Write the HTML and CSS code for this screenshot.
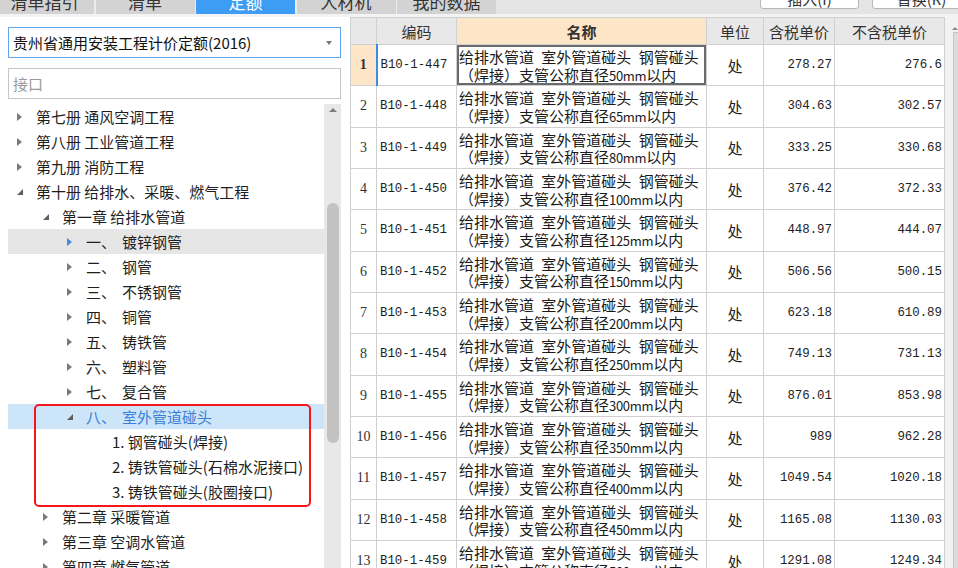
FILE: index.html
```html
<!DOCTYPE html>
<html lang="zh-CN">
<head>
<meta charset="utf-8">
<title>定额</title>
<link rel="stylesheet" href="styles.css">
</head>
<body>
<div class="topbar">
  <div class="tabs">
    <div class="tab"><span>清单指引</span></div>
    <div class="tab"><span>清单</span></div>
    <div class="tab active"><span>定额</span></div>
    <div class="tab"><span>人材机</span></div>
    <div class="tab"><span>我的数据</span></div>
  </div>
  <div class="actions">
    <div class="btn"><span>插入(I)</span></div>
    <div class="btn"><span>替换(R)</span></div>
  </div>
</div>
<div class="main">
  <div class="left">
    <div class="select"><span>贵州省通用安装工程计价定额(2016)</span><i class="caret"></i></div>
    <div class="search">接口</div>
    <div class="treewrap">
      <div class="tree">
        <div class="row l0"><i class="arr"></i><span>第七册 通风空调工程</span></div>
        <div class="row l0"><i class="arr"></i><span>第八册 工业管道工程</span></div>
        <div class="row l0"><i class="arr"></i><span>第九册 消防工程</span></div>
        <div class="row l0"><i class="arr open"></i><span>第十册 给排水、采暖、燃气工程</span></div>
        <div class="row l1"><i class="arr open"></i><span>第一章 给排水管道</span></div>
        <div class="row l2 sel-gray"><i class="arr blue"></i><span class="num">一、</span><span>镀锌钢管</span></div>
        <div class="row l2"><i class="arr"></i><span class="num">二、</span><span>钢管</span></div>
        <div class="row l2"><i class="arr"></i><span class="num">三、</span><span>不锈钢管</span></div>
        <div class="row l2"><i class="arr"></i><span class="num">四、</span><span>铜管</span></div>
        <div class="row l2"><i class="arr"></i><span class="num">五、</span><span>铸铁管</span></div>
        <div class="row l2"><i class="arr"></i><span class="num">六、</span><span>塑料管</span></div>
        <div class="row l2"><i class="arr"></i><span class="num">七、</span><span>复合管</span></div>
        <div class="row l2 sel-blue"><i class="arr open"></i><span class="num">八、</span><span>室外管道碰头</span></div>
        <div class="row l3"><span>1. 钢管碰头(焊接)</span></div>
        <div class="row l3"><span>2. 铸铁管碰头(石棉水泥接口)</span></div>
        <div class="row l3"><span>3. 铸铁管碰头(胶圈接口)</span></div>
        <div class="row l1"><i class="arr"></i><span>第二章 采暖管道</span></div>
        <div class="row l1"><i class="arr"></i><span>第三章 空调水管道</span></div>
        <div class="row l1"><i class="arr"></i><span>第四章 燃气管道</span></div>
      </div>
      <div class="vscroll"><i class="up"></i><div class="thumb"></div></div>
      <div class="redbox"></div>
    </div>
  </div>
  <div class="right">
    <table class="grid">
      <colgroup><col class="c-no"><col class="c-code"><col class="c-name"><col class="c-unit"><col class="c-tax"><col class="c-notax"></colgroup>
      <thead>
        <tr><th class="no"></th><th>编码</th><th class="hname">名称</th><th>单位</th><th>含税单价</th><th>不含税单价</th></tr>
      </thead>
      <tbody>
        <tr class="cur"><td class="no">1</td><td class="code">B10-1-447</td><td class="name">给排水管道 室外管道碰头 钢管碰头<br>（焊接）支管公称直径<span class="dim">50mm</span>以内</td><td class="unit">处</td><td class="price">278.27</td><td class="price">276.6</td></tr>
        <tr><td class="no">2</td><td class="code">B10-1-448</td><td class="name">给排水管道 室外管道碰头 钢管碰头<br>（焊接）支管公称直径<span class="dim">65mm</span>以内</td><td class="unit">处</td><td class="price">304.63</td><td class="price">302.57</td></tr>
        <tr><td class="no">3</td><td class="code">B10-1-449</td><td class="name">给排水管道 室外管道碰头 钢管碰头<br>（焊接）支管公称直径<span class="dim">80mm</span>以内</td><td class="unit">处</td><td class="price">333.25</td><td class="price">330.68</td></tr>
        <tr><td class="no">4</td><td class="code">B10-1-450</td><td class="name">给排水管道 室外管道碰头 钢管碰头<br>（焊接）支管公称直径<span class="dim">100mm</span>以内</td><td class="unit">处</td><td class="price">376.42</td><td class="price">372.33</td></tr>
        <tr><td class="no">5</td><td class="code">B10-1-451</td><td class="name">给排水管道 室外管道碰头 钢管碰头<br>（焊接）支管公称直径<span class="dim">125mm</span>以内</td><td class="unit">处</td><td class="price">448.97</td><td class="price">444.07</td></tr>
        <tr><td class="no">6</td><td class="code">B10-1-452</td><td class="name">给排水管道 室外管道碰头 钢管碰头<br>（焊接）支管公称直径<span class="dim">150mm</span>以内</td><td class="unit">处</td><td class="price">506.56</td><td class="price">500.15</td></tr>
        <tr><td class="no">7</td><td class="code">B10-1-453</td><td class="name">给排水管道 室外管道碰头 钢管碰头<br>（焊接）支管公称直径<span class="dim">200mm</span>以内</td><td class="unit">处</td><td class="price">623.18</td><td class="price">610.89</td></tr>
        <tr><td class="no">8</td><td class="code">B10-1-454</td><td class="name">给排水管道 室外管道碰头 钢管碰头<br>（焊接）支管公称直径<span class="dim">250mm</span>以内</td><td class="unit">处</td><td class="price">749.13</td><td class="price">731.13</td></tr>
        <tr><td class="no">9</td><td class="code">B10-1-455</td><td class="name">给排水管道 室外管道碰头 钢管碰头<br>（焊接）支管公称直径<span class="dim">300mm</span>以内</td><td class="unit">处</td><td class="price">876.01</td><td class="price">853.98</td></tr>
        <tr><td class="no">10</td><td class="code">B10-1-456</td><td class="name">给排水管道 室外管道碰头 钢管碰头<br>（焊接）支管公称直径<span class="dim">350mm</span>以内</td><td class="unit">处</td><td class="price">989</td><td class="price">962.28</td></tr>
        <tr><td class="no">11</td><td class="code">B10-1-457</td><td class="name">给排水管道 室外管道碰头 钢管碰头<br>（焊接）支管公称直径<span class="dim">400mm</span>以内</td><td class="unit">处</td><td class="price">1049.54</td><td class="price">1020.18</td></tr>
        <tr><td class="no">12</td><td class="code">B10-1-458</td><td class="name">给排水管道 室外管道碰头 钢管碰头<br>（焊接）支管公称直径<span class="dim">450mm</span>以内</td><td class="unit">处</td><td class="price">1165.08</td><td class="price">1130.03</td></tr>
        <tr><td class="no">13</td><td class="code">B10-1-459</td><td class="name">给排水管道 室外管道碰头 钢管碰头<br>（焊接）支管公称直径<span class="dim">500mm</span>以内</td><td class="unit">处</td><td class="price">1291.08</td><td class="price">1249.34</td></tr>
      </tbody>
    </table>
    <div class="tscroll"><i class="up"></i><div class="tthumb"></div></div>
  </div>
</div>
</body>
</html>
```
FILE: styles.css
```css
html, body {
  margin: 0;
  padding: 0;
}
body {
  width: 958px;
  height: 568px;
  overflow: hidden;
  background: #fff;
  color: #222;
  font-family: "Noto Sans CJK SC", "Noto Sans", sans-serif;
}

/* top bar */
.topbar {
  height: 14px;
  display: flex;
  justify-content: space-between;
  background: #e4e4e4;
  border-bottom: 3px solid #f3f3f3;
  overflow: hidden;
}
.tabs {
  display: flex;
  gap: 1.5px;
  margin-left: -5px;
  background: #ececec;
}
.tab {
  width: 99px;
  height: 14px;
  background: #d3d3d3;
  display: flex;
  justify-content: center;
  align-items: flex-end;
  overflow: hidden;
  color: #333;
}
.tab span {
  font-size: 17px;
  line-height: 17px;
  margin-bottom: 4px;
  white-space: nowrap;
}
.tab.active {
  background: #3d9cf3;
  color: #fff;
}
.actions {
  display: flex;
  gap: 13px;
  margin-right: -13px;
}
.btn {
  width: 99px;
  height: 19px;
  margin-top: -10px;
  box-sizing: border-box;
  background: #fff;
  border: 1px solid #b8b8b8;
  border-radius: 3px;
  display: flex;
  justify-content: center;
  align-items: flex-start;
  overflow: hidden;
  color: #333;
}
.btn span {
  font-size: 15px;
  line-height: 15px;
  white-space: nowrap;
}

/* main */
.main {
  display: flex;
  height: 551px;
  overflow: hidden;
}
.left {
  width: 342px;
  flex: none;
  box-sizing: border-box;
  padding: 10px 1px 0 8px;
  background: #fff;
}
.select {
  height: 31px;
  box-sizing: border-box;
  border: 1px solid #63a5ec;
  display: flex;
  align-items: center;
  padding-left: 4px;
  font-size: 15px;
  color: #111;
}
.caret {
  margin-left: auto;
  margin-right: 8px;
  width: 0;
  height: 0;
  border-top: 4px solid #777;
  border-left: 3.5px solid transparent;
  border-right: 3.5px solid transparent;
}
.search {
  margin-top: 10px;
  height: 31px;
  box-sizing: border-box;
  border: 1px solid #c6c6c6;
  display: flex;
  align-items: center;
  padding-left: 4px;
  font-size: 15px;
  color: #9a9a9a;
}
.treewrap {
  margin-top: 5px;
  height: 464px;
  display: flex;
  position: relative;
}
.tree {
  flex: 1;
  overflow: hidden;
}
.row {
  height: 25px;
  display: flex;
  align-items: center;
  font-size: 15px;
  color: #1e1e1e;
  white-space: nowrap;
}
.row.l0 { padding-left: 9px; }
.row.l1 { padding-left: 35px; }
.row.l2 { padding-left: 59px; }
.row.l3 { padding-left: 104px; }
.arr {
  width: 19px;
  height: 25px;
  flex: none;
  position: relative;
}
.arr::before {
  content: "";
  position: absolute;
  left: 0;
  top: 8.5px;
  width: 0;
  height: 0;
  border-left: 5px solid #7a7a7a;
  border-top: 4px solid transparent;
  border-bottom: 4px solid transparent;
}
.arr.blue::before {
  border-left-color: #3a8fe2;
}
.arr.open::before {
  top: 10px;
  left: 0;
  border-left: 6px solid transparent;
  border-top: 0;
  border-bottom: 6px solid #5e5e5e;
}
.num {
  width: 36px;
  flex: none;
}
.sel-gray { background: #e6e6e6; }
.sel-blue { background: #cde5f8; color: #3a80d6; }

.vscroll {
  width: 17px;
  flex: none;
  background: #e8e8e8;
  display: flex;
  flex-direction: column;
  align-items: center;
  padding-top: 4px;
  box-sizing: border-box;
}
.vscroll .up {
  width: 0;
  height: 0;
  border-bottom: 4px solid #7e7e7e;
  border-left: 4.5px solid transparent;
  border-right: 4.5px solid transparent;
}
.vscroll .thumb {
  margin-top: 91px;
  width: 12px;
  height: 240px;
  border-radius: 6px;
  background: #c2c2c2;
}
.redbox {
  position: absolute;
  left: 26px;
  top: 300px;
  width: 277px;
  height: 103px;
  box-sizing: border-box;
  border: 2.5px solid #f5161b;
  border-radius: 5px;
}

/* right table */
.right {
  flex: 1;
  display: flex;
  padding-left: 8px;
  background: #fff;
}
.grid {
  width: 594px;
  flex: none;
  table-layout: fixed;
  border-collapse: collapse;
  align-self: flex-start;
  font-size: 15px;
  color: #222;
}
.c-no { width: 26px; }
.c-code { width: 80px; }
.c-name { width: 250px; }
.c-unit { width: 57px; }
.c-tax { width: 71px; }
.c-notax { width: 110px; }
.grid th, .grid td {
  border: 1px solid #d0d0d0;
  padding: 0;
  overflow: hidden;
  white-space: nowrap;
}
.grid thead tr { height: 27px; }
.grid th {
  background: #e8e8e8;
  font-weight: normal;
  color: #333;
  text-align: center;
}
.grid th.hname {
  background: #fde5c8;
  font-weight: bold;
}
.grid tbody tr { height: 41.33px; }
.grid td.no {
  text-align: center;
  font-family: "Liberation Serif", serif;
  font-size: 14px;
  color: #333;
}
.grid td.code {
  font-family: "Liberation Mono", monospace;
  font-size: 12.4px;
  padding-left: 3px;
  color: #222;
}
.grid td.name {
  padding-left: 2px;
  padding-top: 2px;
  font-size: 15px;
  line-height: 17.5px;
  word-spacing: 4px;
  color: #1a1a1a;
}
.grid td.name .dim {
  font-size: 13px;
  letter-spacing: -0.3px;
}
.grid td.unit {
  text-align: center;
  font-size: 15px;
}
.grid td.price {
  text-align: right;
  padding-right: 2px;
  font-family: "Liberation Mono", monospace;
  font-size: 12.4px;
  color: #222;
}
.grid tr.cur td.no {
  background: #fde5c8;
  font-weight: bold;
}
.grid tr.cur td.code {
  border-left: 2px solid #3a8ee6;
}
.grid tr.cur td.name {
  box-shadow: inset 0 0 0 2px #6a6a6a;
}

.tscroll {
  width: 14px;
  flex: none;
  background: #f2f2f2;
  display: flex;
  flex-direction: column;
  align-items: flex-end;
  padding-top: 10px;
  box-sizing: border-box;
}
.tscroll .up {
  width: 0;
  height: 0;
  margin-right: 1px;
  border-bottom: 3px solid #8a8a8a;
  border-left: 3px solid transparent;
  border-right: 3px solid transparent;
}
.tscroll .tthumb {
  margin-top: 2px;
  width: 6px;
  height: 600px;
  box-sizing: border-box;
  background: #dcdcdc;
  border-left: 1px solid #c6c6c6;
  border-top: 1px solid #c6c6c6;
}
```
